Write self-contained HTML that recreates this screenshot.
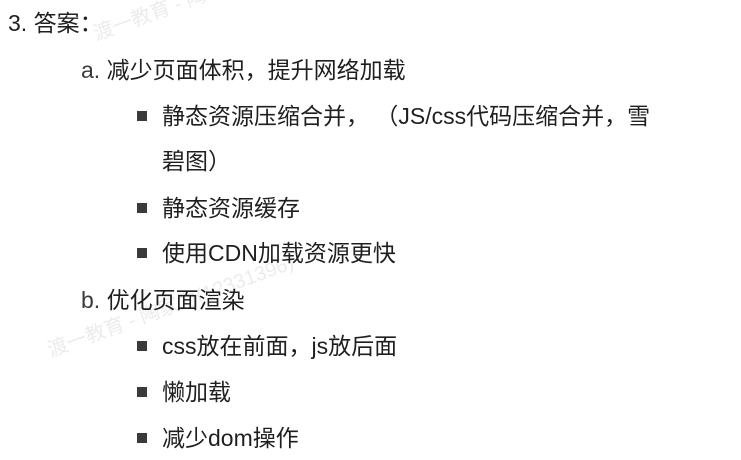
<!DOCTYPE html>
<html><head><meta charset="utf-8"><style>
body{margin:0;width:741px;height:460px;background:#fff;overflow:hidden;position:relative;font-family:"Liberation Sans","Noto Sans CJK SC",sans-serif;font-size:23px;color:#1f1f1f}
.l{position:absolute;white-space:nowrap;line-height:24px}
.m{color:#3a3a3a}
.sq{position:absolute;width:10px;height:10px;background:#3a3a3a}
.wm{position:absolute;color:#ececec;font-size:20px;transform:rotate(-20deg);white-space:nowrap}
</style></head><body>
<div class="wm" style="left:40px;top:290px">渡一教育 - 陶家为(12331396)</div>
<div class="wm" style="left:90px;top:-2px">渡一教育 - 陶</div>
<div class="l" style="left:8px;top:11px">3. 答案：</div>
<div class="l" style="left:81px;top:58px"><span class="m">a.</span> 减少页面体积，提升网络加载</div>
<div class="sq" style="left:137px;top:111px"></div><div class="l" style="left:162px;top:104px">静态资源压缩合并， （JS/css代码压缩合并，雪</div>
<div class="l" style="left:162px;top:149px">碧图）</div>
<div class="sq" style="left:137px;top:203px"></div><div class="l" style="left:162px;top:196px">静态资源缓存</div>
<div class="sq" style="left:137px;top:248px"></div><div class="l" style="left:162px;top:241px">使用CDN加载资源更快</div>
<div class="l" style="left:81px;top:288px"><span class="m">b.</span> 优化页面渲染</div>
<div class="sq" style="left:137px;top:341px"></div><div class="l" style="left:162px;top:334px">css放在前面，js放后面</div>
<div class="sq" style="left:137px;top:387px"></div><div class="l" style="left:162px;top:380px">懒加载</div>
<div class="sq" style="left:137px;top:433px"></div><div class="l" style="left:162px;top:426px">减少dom操作</div>
</body></html>
